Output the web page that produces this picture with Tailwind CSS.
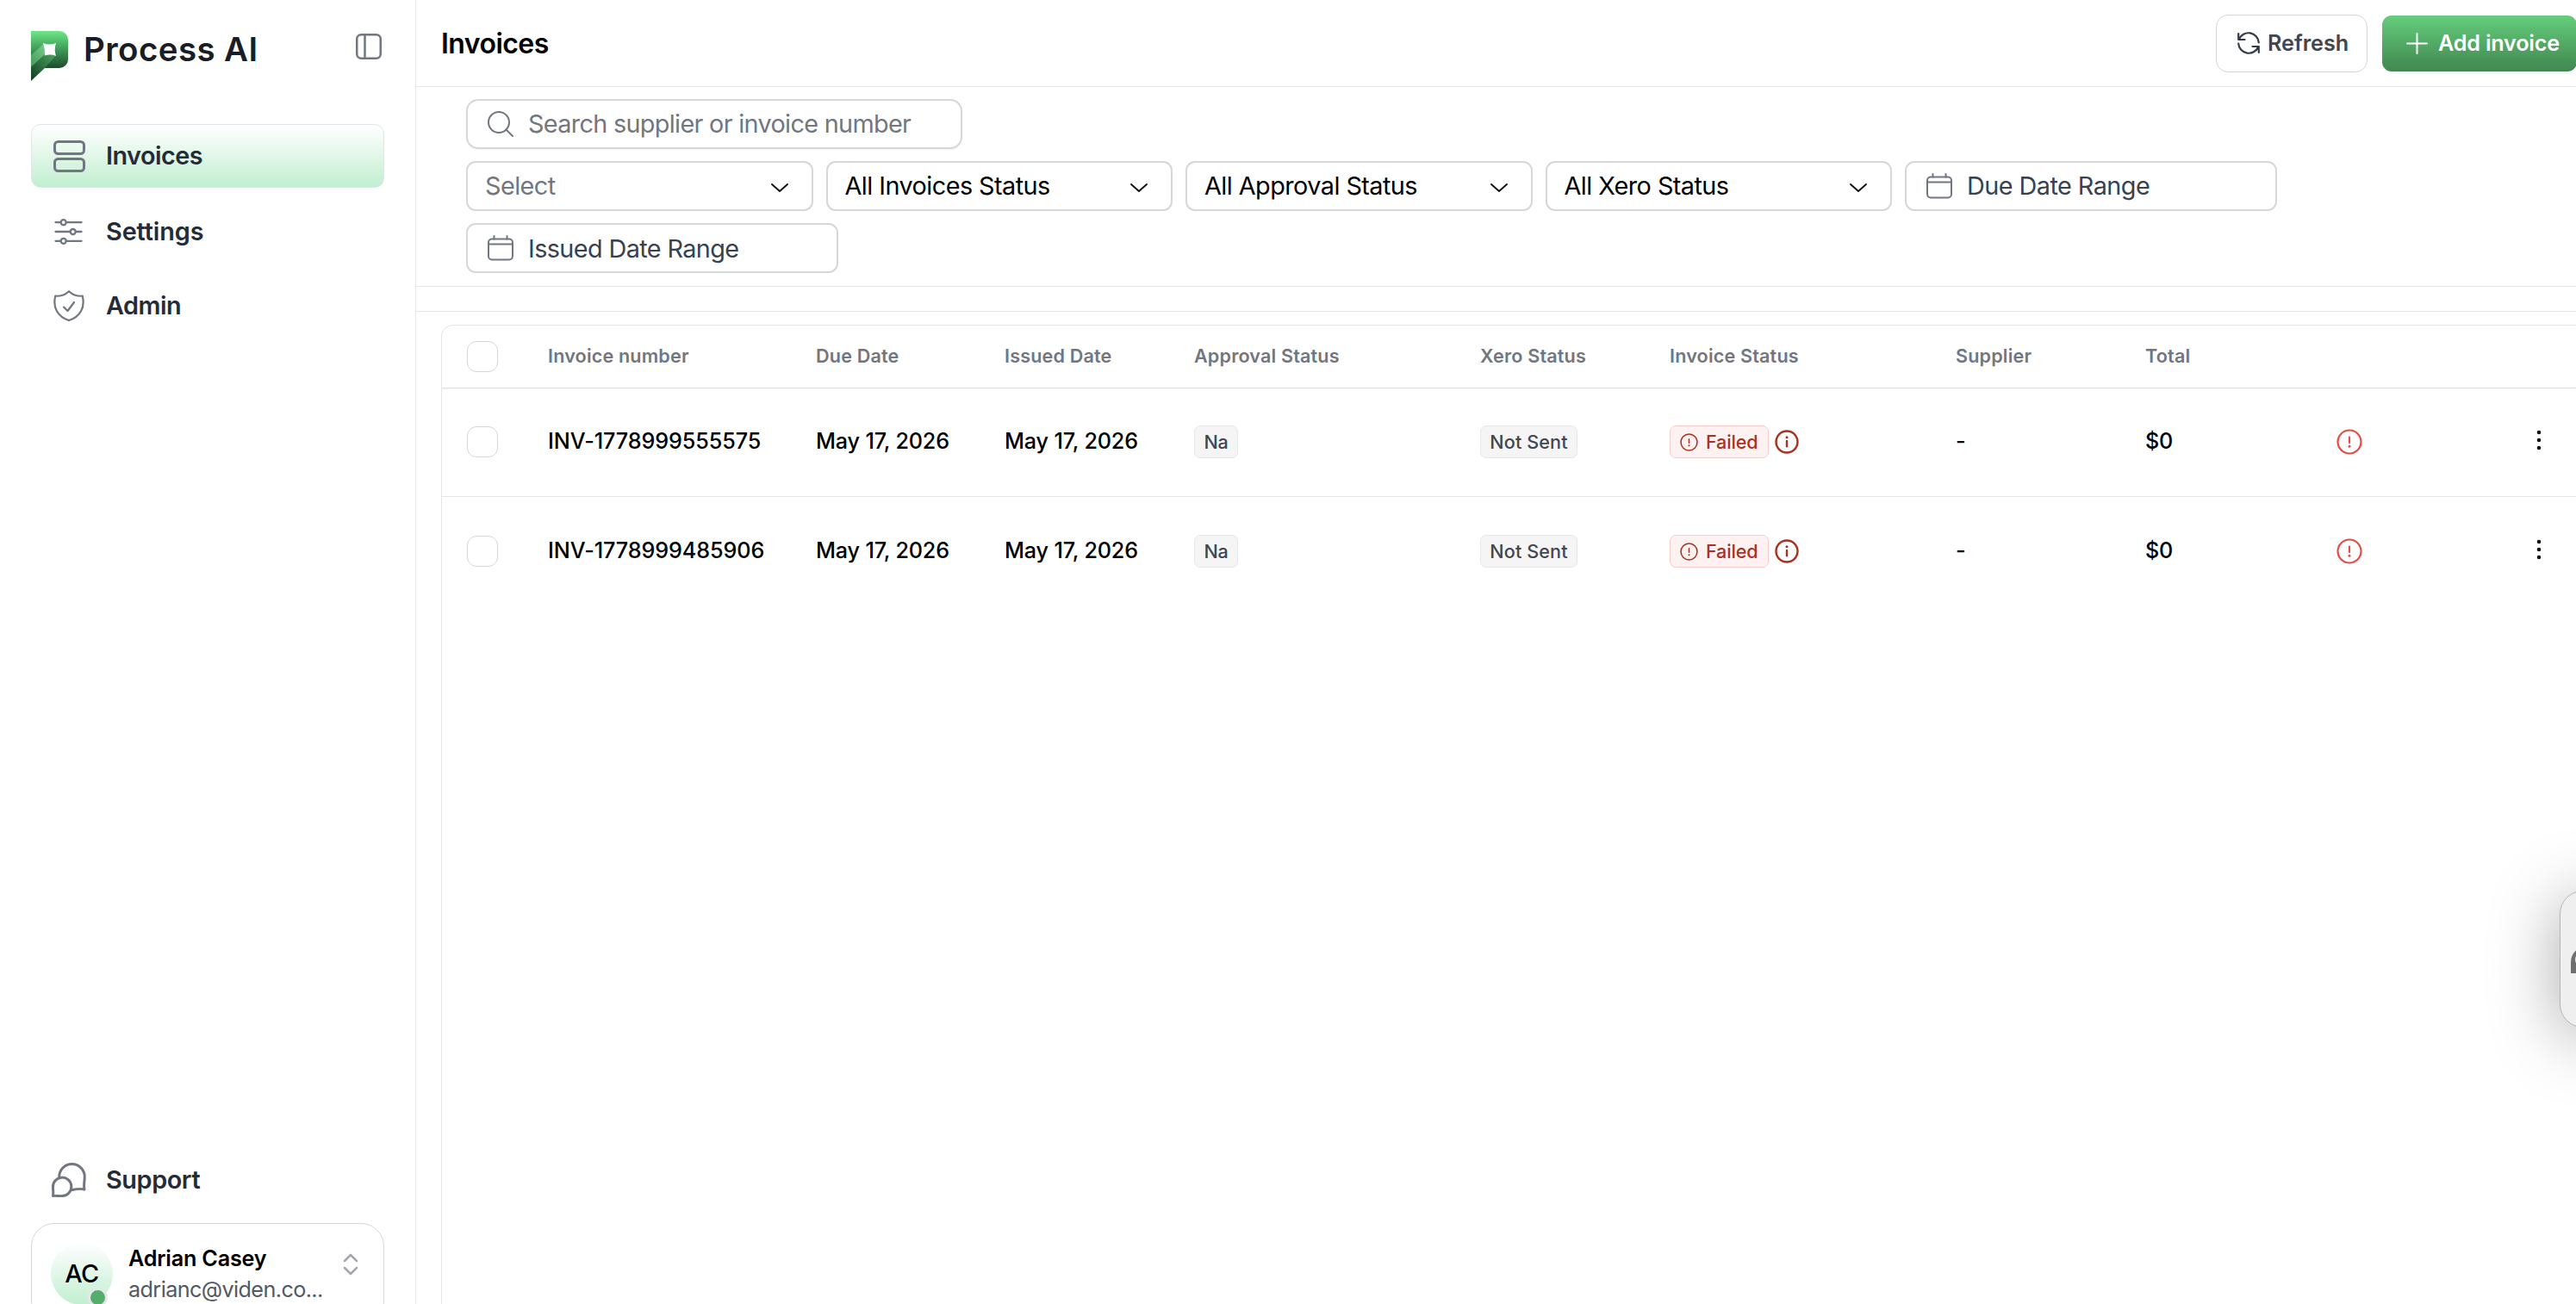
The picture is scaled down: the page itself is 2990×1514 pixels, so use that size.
<!DOCTYPE html>
<html lang="en">
<head>
  <meta charset="UTF-8" />
  <meta name="viewport" content="width=device-width, initial-scale=1.0" />
  <title>Process AI - Invoices</title>
  <script src="https://cdn.jsdelivr.net/npm/@tailwindcss/browser@4"></script>
</head>
<body class="bg-white font-['Inter',sans-serif] text-[25.2px] text-black overflow-hidden">
  <!-- Shared icons -->
  <svg class="hidden">
    <symbol id="chevron" viewBox="0 0 20 10"><path d="M1 1l9 8 9-8" fill="none" stroke="#111" stroke-width="1.9" stroke-linecap="round" stroke-linejoin="round" /></symbol>
    <symbol id="calendar" viewBox="0 0 30 30"><g fill="none" stroke="#717680" stroke-width="2" stroke-linecap="round"><rect x="1" y="4.5" width="28" height="24" rx="4" /><path d="M1 10.5h28M7.500 1v3.500M22.500 1v3.500" /></g></symbol>
    <symbol id="alert" viewBox="0 0 30 30"><circle cx="15" cy="15" r="13.500" fill="none" stroke="currentColor" stroke-width="2.200" /><path d="M15 9.500v6.500" stroke="currentColor" stroke-width="2.200" stroke-linecap="round" /><circle cx="15" cy="20.300" r="1.500" fill="currentColor" /></symbol>
    <symbol id="info" viewBox="0 0 28 28"><circle cx="14" cy="14" r="12.500" fill="none" stroke="currentColor" stroke-width="2.400" /><path d="M14 13v6.200" stroke="currentColor" stroke-width="2.400" stroke-linecap="round" /><circle cx="14" cy="8.800" r="1.500" fill="currentColor" /></symbol>
    <symbol id="dots" viewBox="0 0 6 24"><g fill="#111"><circle cx="3" cy="3" r="2.300" /><circle cx="3" cy="12" r="2.300" /><circle cx="3" cy="21" r="2.300" /></g></symbol>
  </svg>

  <div class="flex h-[1514px] w-[2990px] overflow-hidden">
    <!-- Sidebar -->
    <aside class="flex w-[483px] shrink-0 flex-col border-r border-[#e5e6e8] px-9">
      <div class="flex h-[144px] items-start pt-9">
        <svg class="h-[58px] w-[43px]" viewBox="0 0 43 58">
          <defs>
            <linearGradient id="lg1" x1="0" y1="0" x2="0" y2="1"><stop offset="0" stop-color="#6ee787" /><stop offset="0.5" stop-color="#3f9a57" /><stop offset="1" stop-color="#1f4a2b" /></linearGradient>
            <linearGradient id="lg2" x1="1" y1="0" x2="0" y2="1"><stop offset="0" stop-color="#7ccb90" /><stop offset="1" stop-color="#3f9a59" /></linearGradient>
            <linearGradient id="lg3" x1="1" y1="0" x2="0" y2="1"><stop offset="0" stop-color="#4aa564" /><stop offset="1" stop-color="#123a1f" /></linearGradient>
          </defs>
          <path d="M0 0h33a10 10 0 0 1 10 10v23a10 10 0 0 1-10 10H15L0 43z" fill="url(#lg1)" />
          <path d="M14.500 15L0 28v14l17-15z" fill="url(#lg2)" />
          <path d="M28.500 28.500L16 27 0 42v16l16-15z" fill="url(#lg3)" />
          <path d="M14 14q7.500 3 15 0-2.500 7.500 0 15-6.500-2.500-13-.5.500-7.500-2-14.500z" fill="#fff" />
        </svg>
        <span class="ml-[18px] mt-[-3px] text-[38.500px] leading-[48px] font-semibold tracking-[0.400px] text-[#1a1d26]">Process AI</span>
        <svg class="ml-auto mr-[3px] mt-[3px] size-[30px]" viewBox="0 0 30 30" fill="none" stroke="#717680" stroke-width="2.500"><rect x="1.250" y="1.250" width="27.500" height="27.500" rx="5" /><path d="M10.500 1v28" /></svg>
      </div>

      <nav class="flex flex-col gap-[14px] text-[28.8px] font-semibold tracking-[-0.5px] text-[#252b37]">
        <a class="flex h-[74px] items-center rounded-[11px] border border-[#e3e6e8] bg-linear-to-b from-white to-[#c1eed0] pl-[25px]">
          <svg class="size-[37px]" viewBox="0 0 37 37" fill="none" stroke="#717680" stroke-width="3"><rect x="1.500" y="1.500" width="34" height="14" rx="4" /><rect x="1.500" y="21.500" width="34" height="14" rx="4" /></svg>
          <span class="ml-[24px]">Invoices</span>
        </a>
        <a class="flex h-[73px] items-center pl-[27px]">
          <svg class="h-[30px] w-[33px]" viewBox="0 0 33 30" stroke="#717680" stroke-width="2.300" stroke-linecap="round" fill="none"><path d="M1.500 4.200H7M14.500 4.200h17M1.500 15H18M25.500 15h6M1.500 25.800H7M14.500 25.800h17" /><circle cx="10.700" cy="4.200" r="3" /><circle cx="21.700" cy="15" r="3" /><circle cx="10.700" cy="25.800" r="3" /></svg>
          <span class="ml-[27px] mt-px tracking-[-0.100px]">Settings</span>
        </a>
        <a class="flex h-[71px] items-center pl-[26px]">
          <svg class="h-[36px] w-[36px]" viewBox="0 0 36 36" stroke="#717680" stroke-width="2.200" stroke-linecap="round" stroke-linejoin="round" fill="none"><path d="M18 1.200C14 5 8 7 2.200 6.700 -1 20 5 31 18 35 31 31 37 20 33.800 6.700 28 7 22 5 18 1.200z" /><path d="M12 19.500l4.500 4.500 7.500-10" /></svg>
          <span class="ml-[25px] mt-px">Admin</span>
        </a>
      </nav>

      <a class="mt-auto flex h-[72px] items-center pl-6 text-[28.8px] font-semibold tracking-[-0.400px] text-[#252b37]">
        <svg class="size-[40px] overflow-visible" viewBox="0 0 40 40" stroke="#717680" stroke-width="3" stroke-linecap="round" stroke-linejoin="round" fill="none"><path d="M8.800 17.500A14.750 14.750 0 1 1 38.200 17.500c0 5-1.500 8-.2 13.500-5-1.500-9-.5-15 .5" /><path d="M1.500 38.500c.8-3.500 0-5.500 0-9.500a10.700 10.700 0 1 1 11 9.500c-4 .5-7-.5-11 0z" /></svg>
        <span class="ml-[23px]">Support</span>
      </a>
      <div class="mt-[14px] h-[94px] shrink-0">
        <div class="flex h-[118px] w-[410px] items-start rounded-[27px] border border-[#d5d7da] pl-[22px] pt-[22px]">
          <div class="relative flex size-[72px] items-center justify-center rounded-full bg-linear-to-b from-white to-[#c1eed0] text-[28.8px] font-medium tracking-[-0.500px]">
            <span>AC</span>
            <span class="absolute left-[43px] top-[52px] size-[23px] rounded-full border-[3px] border-[#e5e7e9] bg-[#53ae6c]"></span>
          </div>
          <div class="ml-[18px] leading-9">
            <p class="w-max font-semibold tracking-[-0.200px]">Adrian Casey</p>
            <p class="w-max tracking-[-0.600px] text-[#535862]">adrianc@viden.co...</p>
          </div>
          <svg class="ml-auto mr-[29px] mt-[12px] h-[26px] w-[18px]" viewBox="0 0 18 26" stroke="#a4a7ae" stroke-width="2.500" stroke-linecap="round" stroke-linejoin="round" fill="none"><path d="M2 9l7-7 7 7M2 17l7 7 7-7" /></svg>
        </div>
      </div>
    </aside>

    <!-- Main -->
    <main class="flex w-[2507px] shrink-0 flex-col">
      <header class="flex h-[101px] shrink-0 items-center border-b border-[#e5e6e8] pl-[29px]">
        <h1 class="mt-px text-[32px] font-semibold tracking-[-0.550px]">Invoices</h1>
        <button class="ml-auto flex h-[67px] w-[176px] items-center rounded-[14px] border border-[#d5d7da] pl-6 font-semibold tracking-[-0.050px] text-[#414651]">
          <svg class="size-[26px]" viewBox="0 0 26 26" stroke="#343a46" stroke-width="2.200" stroke-linecap="round" stroke-linejoin="round" fill="none"><path d="M1.200 2v7h7.300M1.800 8.500A12 12 0 0 1 24.800 12.500M24.800 24v-7h-7.300M24.200 17.500A12 12 0 0 1 1.200 13.500" /></svg>
          <span class="ml-[9px] mt-px">Refresh</span>
        </button>
        <button class="-mr-px ml-[17px] flex h-[65px] w-[226px] items-center rounded-[11px] bg-linear-to-b from-[#65ce7d] to-[#41874f] pl-7 font-semibold tracking-[-0.200px] text-white">
          <svg class="size-[25px]" viewBox="0 0 25 25" stroke="#fff" stroke-width="2" stroke-linecap="round"><path d="M12.500 1v23M1 12.500h23" /></svg>
          <span class="ml-3 mt-px whitespace-nowrap">Add invoice</span>
        </button>
      </header>

      <!-- Filters -->
      <section class="flex h-[232px] shrink-0 flex-col gap-[14px] border-b border-[#e5e6e8] pl-[58px] pt-[14px] text-[28.8px] tracking-[-0.540px]">
        <div class="flex h-[58px] w-[576px] items-center rounded-[14px] border-2 border-[#d5d7da] pl-[23px] tracking-[-0.670px] text-[#717680] shadow-xs">
          <svg class="size-[30px]" viewBox="0 0 30 30" stroke="#717680" stroke-width="2" stroke-linecap="round" fill="none"><circle cx="13" cy="13" r="12" /><path d="M21.500 21.500L29 29" /></svg>
          <span class="ml-[17px]">Search supplier or invoice number</span>
        </div>
        <div class="flex h-[58px] gap-[15px]">
          <div class="flex w-[402.500px] items-center justify-between rounded-[11px] border-2 border-[#d5d7da] pl-5 pr-[27px] text-[#717680]"><span>Select</span><svg class="mt-1 h-[10px] w-5"><use href="#chevron" /></svg></div>
          <div class="flex w-[402.500px] items-center justify-between rounded-[11px] border-2 border-[#d5d7da] pl-5 pr-[27px]"><span>All Invoices Status</span><svg class="mt-1 h-[10px] w-5"><use href="#chevron" /></svg></div>
          <div class="flex w-[402.500px] items-center justify-between rounded-[11px] border-2 border-[#d5d7da] pl-5 pr-[27px]"><span>All Approval Status</span><svg class="mt-1 h-[10px] w-5"><use href="#chevron" /></svg></div>
          <div class="flex w-[402.500px] items-center justify-between rounded-[11px] border-2 border-[#d5d7da] pl-5 pr-[27px]"><span>All Xero Status</span><svg class="mt-1 h-[10px] w-5"><use href="#chevron" /></svg></div>
          <div class="flex w-[432px] items-center rounded-[11px] border-2 border-[#d5d7da] pl-[23px] text-[#374151]"><svg class="size-[30px]"><use href="#calendar" /></svg><span class="ml-[17px]">Due Date Range</span></div>
        </div>
        <div class="flex h-[58px] w-[432px] items-center rounded-[11px] border-2 border-[#d5d7da] pl-[23px] text-[#374151]"><svg class="size-[30px]"><use href="#calendar" /></svg><span class="ml-[17px] mt-px tracking-[-0.600px]">Issued Date Range</span></div>
      </section>
      <div class="h-[29px] shrink-0 border-b border-[#e5e6e8]"></div>

      <!-- Invoice table -->
      <div class="ml-[29px] mt-[15px] flex-1 overflow-hidden rounded-tl-[14px] border-l border-t border-[#e5e6e8]">
        <div class="grid h-[73px] grid-cols-[122px_311px_219px_220px_332px_220px_332px_220px_222px_1fr] items-center border-b border-[#dbdde0] pl-px text-[21.6px] font-semibold tracking-[0.160px] text-[#717680] shadow-xs">
          <span class="ml-7 size-9 rounded-[11px] border border-[#d5d7da]"></span>
          <span class="-mt-px">Invoice number</span>
          <span class="-mt-px">Due Date</span>
          <span class="-mt-px">Issued Date</span>
          <span class="-mt-px">Approval Status</span>
          <span class="-mt-px">Xero Status</span>
          <span class="-mt-px">Invoice Status</span>
          <span class="-mt-px">Supplier</span>
          <span class="-mt-px">Total</span>
        </div>

        <div class="grid h-[126px] grid-cols-[122px_311px_219px_220px_332px_220px_332px_220px_222px_1fr] items-center border-b border-[#e5e6e8] pb-px pl-px font-[450] tracking-[-0.180px]">
          <span class="ml-7 size-9 rounded-[11px] border border-[#d5d7da]"></span>
          <span class="tracking-[-0.100px]">INV-1778999555575</span>
          <span>May 17, 2026</span>
          <span>May 17, 2026</span>
          <span class="flex h-[38px] w-[51px] items-center justify-center rounded-[7px] border border-[#e5e7e9] bg-[#f5f5f6] text-[21.6px] text-[#414651]">Na</span>
          <span class="flex h-[38px] w-[113px] items-center justify-center rounded-[7px] border border-[#e5e7e9] bg-[#f5f5f6] text-[21.6px] tracking-[0.100px] text-[#414651]">Not Sent</span>
          <span class="flex items-center gap-[7px] text-[21.6px] text-[#a8321f]">
            <span class="flex h-[38px] w-[115px] items-center gap-[9px] rounded-[7px] border border-[#f8cdc9] bg-[#fdf2f1] pl-[11px]"><svg class="size-[21px]"><use href="#alert" /></svg>Failed</span>
            <svg class="size-[28px]"><use href="#info" /></svg>
          </span>
          <span>-</span>
          <span>$0</span>
          <span class="flex items-center justify-between pr-10 text-[#e34d47]"><svg class="size-[30px]"><use href="#alert" /></svg><svg class="-mt-1 h-6 w-[6px]"><use href="#dots" /></svg></span>
        </div>

        <div class="grid h-[127px] grid-cols-[122px_311px_219px_220px_332px_220px_332px_220px_222px_1fr] items-center pb-px pl-px font-[450] tracking-[-0.180px]">
          <span class="ml-7 size-9 rounded-[11px] border border-[#d5d7da]"></span>
          <span class="tracking-[-0.100px]">INV-1778999485906</span>
          <span>May 17, 2026</span>
          <span>May 17, 2026</span>
          <span class="flex h-[38px] w-[51px] items-center justify-center rounded-[7px] border border-[#e5e7e9] bg-[#f5f5f6] text-[21.6px] text-[#414651]">Na</span>
          <span class="flex h-[38px] w-[113px] items-center justify-center rounded-[7px] border border-[#e5e7e9] bg-[#f5f5f6] text-[21.6px] tracking-[0.100px] text-[#414651]">Not Sent</span>
          <span class="flex items-center gap-[7px] text-[21.6px] text-[#a8321f]">
            <span class="flex h-[38px] w-[115px] items-center gap-[9px] rounded-[7px] border border-[#f8cdc9] bg-[#fdf2f1] pl-[11px]"><svg class="size-[21px]"><use href="#alert" /></svg>Failed</span>
            <svg class="size-[28px]"><use href="#info" /></svg>
          </span>
          <span>-</span>
          <span>$0</span>
          <span class="flex items-center justify-between pr-10 text-[#e34d47]"><svg class="size-[30px]"><use href="#alert" /></svg><svg class="-mt-1 h-6 w-[6px]"><use href="#dots" /></svg></span>
        </div>
      </div>
    </main>
  </div>

  <!-- Floating help handle -->
  <div class="fixed left-[2971px] top-[1034px] h-[159px] w-[80px] rounded-[27px] border border-[#b5b5b5] bg-[#efefef] shadow-[0_10px_80px_rgba(0,0,0,0.35)]">
    <svg class="absolute left-[12px] top-[64px] h-[32px] w-[40px]" viewBox="0 0 40 32"><path d="M0 31V18a18 18 0 0 1 36 0v13z" fill="#6f6f6f" /><ellipse cx="10" cy="15" rx="5" ry="7" fill="#efefef" /></svg>
  </div>
</body>
</html>
